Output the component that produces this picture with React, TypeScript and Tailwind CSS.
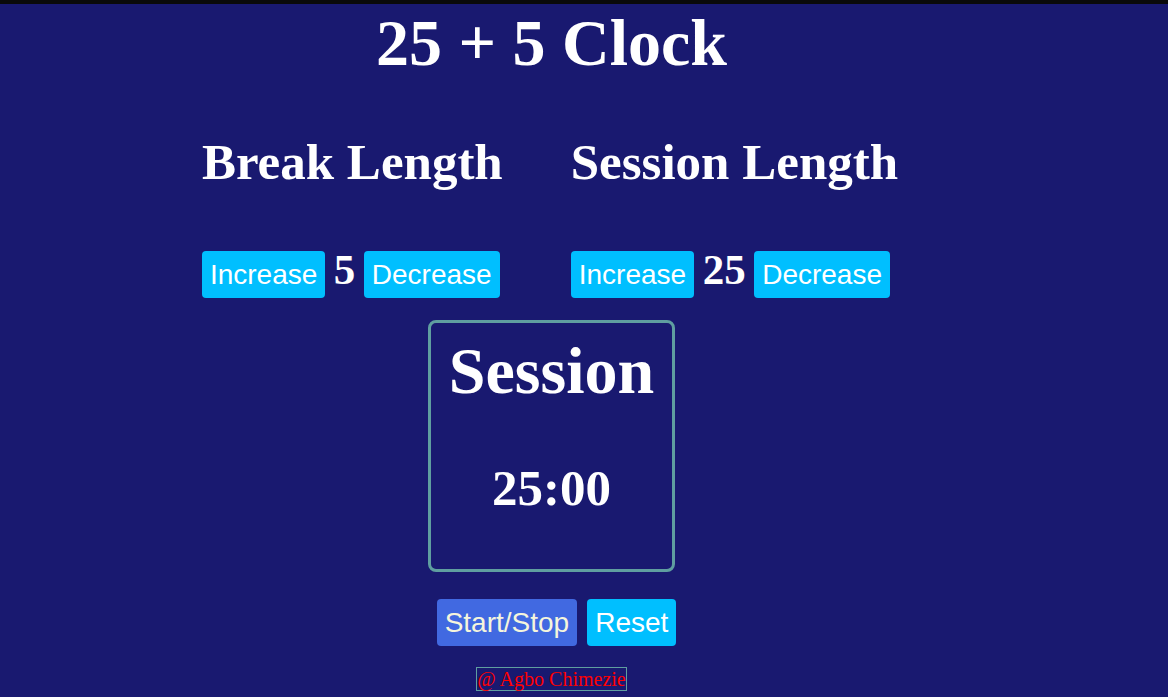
import React from "react";

const serif = { fontFamily: '"Liberation Serif", "Times New Roman", serif' };
const sans = { fontFamily: '"Liberation Sans", Arial, sans-serif' };

function Btn({ label, className }: { label: string; className: string }) {
  return (
    <button
      style={sans}
      className={`rounded-[4px] px-2 py-[7px] text-[28px] leading-[33px] ${className}`}
    >
      {label}
    </button>
  );
}

function LengthControl({ title, value }: { title: string; value: number }) {
  return (
    <div className="flex flex-col items-start">
      <h2 style={serif} className="text-[51px] font-bold leading-none text-white">
        {title}
      </h2>
      <div className="mt-[60px] flex items-baseline gap-[8.5px]">
        <Btn label="Increase" className="bg-[#00bfff] text-white" />
        <span style={serif} className="text-[43px] font-bold leading-none text-white">
          {value}
        </span>
        <Btn label="Decrease" className="bg-[#00bfff] text-white" />
      </div>
    </div>
  );
}

export default function App() {
  return (
    <div className="min-h-screen bg-[#191970]">
      <div className="h-[4px] bg-[#0a0a0a]" />
      <div className="flex w-[1103px] flex-col items-center">
        <h1 style={serif} className="mt-[6px] text-[66px] font-bold leading-none text-white">
          25 + 5 Clock
        </h1>
        <div className="-ml-[3px] mt-[61px] flex gap-[68px]">
          <LengthControl title="Break Length" value={5} />
          <LengthControl title="Session Length" value={25} />
        </div>
        <div className="mt-[22px] flex h-[252px] w-[247px] flex-col items-center rounded-[8px] border-[3px] border-[#5f9ea0] pt-[15px]">
          <h2 style={serif} className="text-[66px] font-bold leading-none text-white">
            Session
          </h2>
          <p style={serif} className="mt-[59px] text-[51px] font-bold leading-none text-white">
            25:00
          </p>
        </div>
        <div className="mt-[27px] ml-[10px] flex gap-[10px]">
          <Btn label="Start/Stop" className="bg-[#4169e1] text-[#f5f5dc]" />
          <Btn label="Reset" className="bg-[#00bfff] text-white" />
        </div>
        <p
          style={serif}
          className="mt-[21px] border border-[#5f9ea0] text-[20px] leading-[22px] text-[#ff0000]"
        >
          @ Agbo Chimezie
        </p>
      </div>
    </div>
  );
}
